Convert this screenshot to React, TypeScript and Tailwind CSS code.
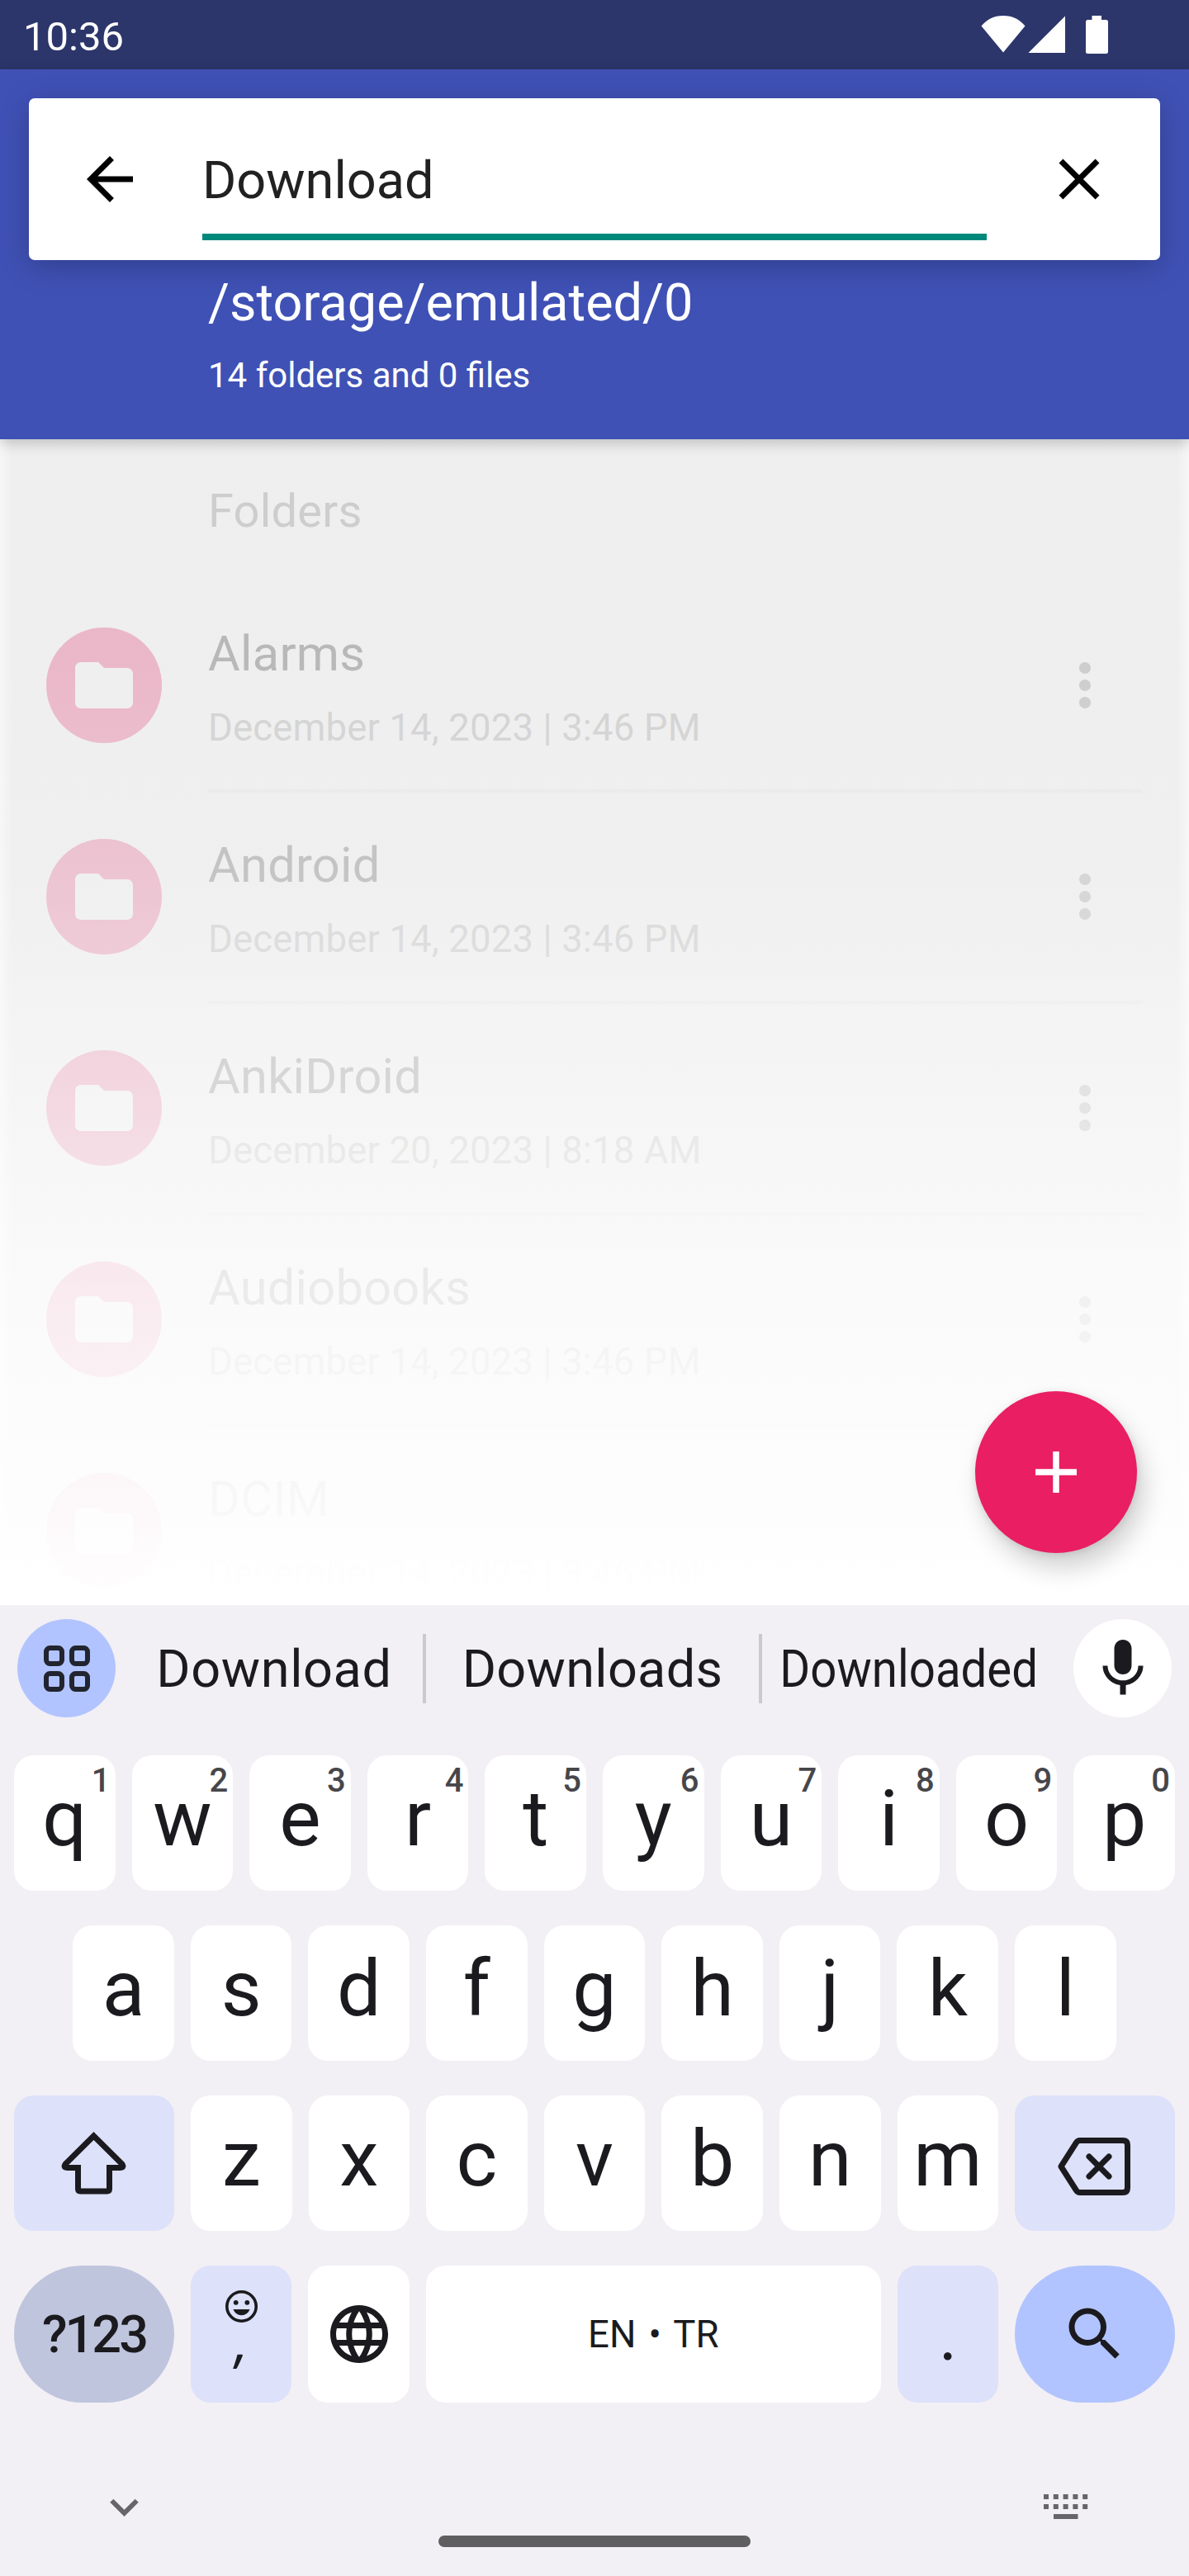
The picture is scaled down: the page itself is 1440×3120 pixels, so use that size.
import React from "react";
import {
  MdArrowBack,
  MdClose,
  MdExpandMore,
  MdFolder,
  MdLanguage,
  MdMic,
  MdMoreVert,
  MdSearch,
} from "react-icons/md";

const folders = [
  { name: "Alarms", date: "December 14, 2023 | 3:46 PM" },
  { name: "Android", date: "December 14, 2023 | 3:46 PM" },
  { name: "AnkiDroid", date: "December 20, 2023 | 8:18 AM" },
  { name: "Audiobooks", date: "December 14, 2023 | 3:46 PM" },
  { name: "DCIM", date: "December 14, 2023 | 3:46 PM" },
];

const topRow = ["q", "w", "e", "r", "t", "y", "u", "i", "o", "p"];
const middleRow = ["a", "s", "d", "f", "g", "h", "j", "k", "l"];
const bottomRow = ["z", "x", "c", "v", "b", "n", "m"];

function StatusBar() {
  return (
    <div className="flex h-[84px] items-start justify-between bg-[#2c366b] pl-[28px] pr-[98px] text-white">
      <span className="mt-[20px] text-[49px] leading-none">10:36</span>
      <div className="mt-[19px] flex items-start">
        <svg className="h-[45px] w-[54px]" viewBox="0 0 54 45" fill="currentColor">
          <path d="M0.5 12.5C7 4.500 16 0 27 0s20 4.500 26.500 12.500L27 44.500z" />
        </svg>
        <svg className="ml-[3px] h-[45px] w-[45px]" viewBox="0 0 45 45" fill="currentColor">
          <path d="M45 0.500V45H0.500z" />
        </svg>
        <svg className="ml-[25px] h-[46px] w-[27px]" viewBox="0 0 27 46" fill="currentColor">
          <path d="M7.500 0h11.500v5h5.500a2.500 2.500 0 0 1 2.500 2.500v36a2.500 2.500 0 0 1-2.500 2.500h-22A2.500 2.500 0 0 1 0 43.500v-36A2.500 2.500 0 0 1 2.500 5h5z" />
        </svg>
      </div>
    </div>
  );
}

function Header() {
  return (
    <header className="relative z-10 h-[448px] bg-[#3f51b5] px-[35px] pt-[35px] shadow-[0_4px_16px_rgba(0,0,0,0.22)]">
      <div className="flex h-[196px] items-center rounded-[7px] bg-white pl-[56px] pr-[56px] shadow-[0_8px_36px_rgba(0,0,0,0.22)]">
        <MdArrowBack className="size-[84px] text-black" />
        <div className="ml-[70px] flex h-[148px] w-[950px] flex-col justify-end border-b-[8px] border-[#00897b] pb-[33px]">
          <span className="text-[63px] leading-none text-[#212121]">Download</span>
        </div>
        <MdClose className="ml-auto size-[84px] text-black" />
      </div>
      <div className="flex flex-col pl-[217px] text-white">
        <span className="mt-[20px] text-[63px] leading-none">/storage/emulated/0</span>
        <span className="mt-[36px] text-[42px] leading-none">14 folders and 0 files</span>
      </div>
    </header>
  );
}

function FolderRow({ name, date }: { name: string; date: string }) {
  return (
    <div className="flex h-[256px] shrink-0 pl-[56px] pr-[56px]">
      <div className="mt-[56px] flex size-[140px] shrink-0 items-center justify-center rounded-full bg-[#e91e63]">
        <MdFolder className="size-[84px] text-[#fafafa]" />
      </div>
      <div className="ml-[56px] flex flex-1 justify-between border-b-[4px] border-[#e6e6e6] pr-[28px]">
        <div className="flex flex-col">
          <span className="mt-[59px] text-[59.5px] leading-none tracking-[0.25px] text-[#212121]">{name}</span>
          <span className="mt-[36px] text-[45.5px] leading-none tracking-[0.13px] text-[#8a8a8a]">{date}</span>
        </div>
        <MdMoreVert className="mt-[84px] size-[84px] text-[#757575]" />
      </div>
    </div>
  );
}

function FolderList() {
  return (
    <section className="relative flex h-[1412px] flex-col overflow-hidden bg-[#fafafa]">
      <h2 className="h-[172px] shrink-0 pl-[252px] pt-[59px] text-[56px] leading-none tracking-[0.2px] text-[#757575]">
        Folders
      </h2>
      {folders.map((f) => (
        <FolderRow key={f.name} name={f.name} date={f.date} />
      ))}
      {/* Fading scrim of the closing suggestion panel */}
      <div className="absolute inset-0 bg-[linear-gradient(to_bottom,rgba(235,235,235,0.75)_0px,rgba(235,235,235,0.75)_270px,rgba(237,237,237,0.80)_518px,rgba(244,244,244,0.86)_773px,rgba(250,250,250,0.93)_1028px,rgba(253,253,253,0.977)_1283px,rgba(255,255,255,0.995)_1400px)]" />
      <div className="absolute inset-y-0 left-0 w-[15px] bg-linear-to-r from-white/50 to-transparent" />
      <div className="absolute inset-y-0 right-0 w-[15px] bg-linear-to-l from-white/50 to-transparent" />
      <button className="absolute bottom-[63px] right-[63px] flex size-[196px] items-center justify-center rounded-full bg-[#e91e63] shadow-[8px_18px_30px_rgba(0,0,0,0.18),0_2px_10px_rgba(0,0,0,0.10)]">
        <svg className="size-[50px]" viewBox="0 0 50 50" stroke="white" strokeWidth="7.500">
          <path d="M25 0v50M0 25h50" />
        </svg>
      </button>
    </section>
  );
}

function LetterKey({ letter, hint }: { letter: string; hint?: string }) {
  return (
    <div className="relative flex h-[164px] flex-1 justify-center rounded-[24px] bg-white text-[#1b1b1f]">
      <span className="mt-[29px] text-[95px] leading-none">{letter}</span>
      {hint && (
        <span className="absolute right-[6px] top-[11px] text-[40px] font-medium leading-none text-[#47464a]">
          {hint}
        </span>
      )}
    </div>
  );
}

function SuggestionStrip() {
  return (
    <div className="flex h-[153px] items-center pl-[21px] pr-[21px] text-[#1b1b1f]">
      <div className="flex size-[119px] items-center justify-center rounded-full bg-[#b2c4ff]">
        <svg className="size-[56px]" viewBox="0 0 56 56" fill="none" stroke="#22252f" strokeWidth="6">
          <rect x="3" y="3" width="19" height="19" rx="4.500" />
          <rect x="34" y="3" width="19" height="19" rx="4.500" />
          <rect x="3" y="34" width="19" height="19" rx="4.500" />
          <rect x="34" y="34" width="19" height="19" rx="4.500" />
        </svg>
      </div>
      <span className="ml-[12px] w-[360px] pt-[2px] text-center text-[63px] leading-none tracking-[0.6px]">Download</span>
      <span className="h-[84px] w-[4px] bg-[#cbc9cf]" />
      <span className="w-[403px] pt-[2px] text-center text-[63px] leading-none tracking-[0.3px]">Downloads</span>
      <span className="h-[84px] w-[4px] bg-[#cbc9cf]" />
      <span className="flex w-[356px] justify-center pt-[2px] text-[63px] leading-none">
        <span className="scale-x-[0.895]">Downloaded</span>
      </span>
      <div className="ml-auto flex size-[119px] items-center justify-center rounded-full bg-white">
        <MdMic className="size-[84px]" />
      </div>
    </div>
  );
}

function ShiftIcon() {
  return (
    <svg className="h-[76px] w-[79px]" viewBox="0 0 79 76" fill="none" stroke="#1b1b1f" strokeWidth="7">
      <path d="M39.500 5 73.800 39q3.200 4.500-2.800 4.500H58.500V69q0 3-3 3h-32q-3 0-3-3V43.500H8q-6 0-2.800-4.500z" />
    </svg>
  );
}

function BackspaceIcon() {
  return (
    <svg className="mr-[2px] mt-[7px] h-[70px] w-[89px]" viewBox="0 0 89 70" fill="none" stroke="#1b1b1f" strokeWidth="7">
      <path d="M4 35 22.500 6q1.700-2.500 4.500-2.500h52q5.500 0 5.500 5.500v52q0 5.500-5.500 5.500H27q-2.800 0-4.500-2.500z" strokeLinejoin="round" />
      <path d="M38 23l24 24M62 23 38 47" strokeLinecap="round" />
    </svg>
  );
}

function EmojiIcon() {
  return (
    <svg className="size-[39px]" viewBox="0 0 39 39" fill="#1b1b1f">
      <circle cx="19.500" cy="19.500" r="17.700" fill="none" stroke="#1b1b1f" strokeWidth="3.600" />
      <circle cx="12.700" cy="14.800" r="2.900" />
      <circle cx="26.300" cy="14.800" r="2.900" />
      <path d="M9.500 23h20c-1.600 4.300-5.500 7.200-10 7.200S11.100 27.300 9.500 23z" />
    </svg>
  );
}

function KeyboardIcon() {
  const columns = [0, 11.8, 23.6, 35.4, 47.2];
  return (
    <svg className="h-[30px] w-[54px]" viewBox="0 0 54 30" fill="#666568">
      {columns.map((x) => (
        <React.Fragment key={x}>
          <rect x={x} y="0" width="6" height="6" />
          <rect x={x} y="12" width="6" height="6" />
        </React.Fragment>
      ))}
      <rect x="12" y="24" width="29.500" height="6" />
    </svg>
  );
}

function Keyboard() {
  return (
    <section className="flex h-[1176px] flex-col bg-[#f2f0f5] shadow-[0_-2px_10px_rgba(0,0,0,0.06)]">
      <SuggestionStrip />
      <div className="mt-[29px] flex flex-col gap-[42px] px-[17px]">
        <div className="flex gap-[20px]">
          {topRow.map((l, i) => (
            <LetterKey key={l} letter={l} hint={String((i + 1) % 10)} />
          ))}
        </div>
        <div className="flex gap-[20px] px-[71.300px]">
          {middleRow.map((l) => (
            <LetterKey key={l} letter={l} />
          ))}
        </div>
        <div className="flex gap-[20px]">
          <div className="flex w-[193.900px] items-center justify-center rounded-[24px] bg-[#dde1f9]">
            <ShiftIcon />
          </div>
          {bottomRow.map((l) => (
            <LetterKey key={l} letter={l} />
          ))}
          <div className="flex w-[193.900px] items-center justify-center rounded-[24px] bg-[#dde1f9]">
            <BackspaceIcon />
          </div>
        </div>
        <div className="flex h-[166px] gap-[20px] text-[#1b1b1f]">
          <div className="flex w-[193.900px] justify-center rounded-full bg-[#c0c5de]">
            <span className="mt-[52px] text-[63px] font-medium leading-none tracking-[-3px]">?123</span>
          </div>
          <div className="flex w-[122.600px] flex-col items-center rounded-[24px] bg-[#dde1f9] pt-[30px]">
            <EmojiIcon />
            <span className="mt-[-15px] inline-block -skew-x-6 font-['Open_Sans'] text-[70px] font-medium leading-none">,</span>
          </div>
          <div className="flex w-[122.600px] items-center justify-center rounded-[24px] bg-white">
            <MdLanguage className="size-[84px]" />
          </div>
          <div className="flex flex-1 justify-center rounded-[24px] bg-white">
            <span className="mt-[61px] text-[45.500px] leading-none [word-spacing:4px]">EN • TR</span>
          </div>
          <div className="flex w-[122.600px] justify-center rounded-[24px] bg-[#dde1f9]">
            <span className="mt-[47px] font-['Lato'] text-[76px] leading-none">.</span>
          </div>
          <div className="flex w-[193.900px] items-center justify-center rounded-full bg-[#b2c4ff]">
            <MdSearch className="size-[84px]" />
          </div>
        </div>
      </div>
      <div className="mt-[91px] flex h-[70px] items-center justify-between pl-[116px] pr-[122px]">
        <MdExpandMore className="size-[69px] text-[#666568]" />
        <KeyboardIcon />
      </div>
      <div className="mx-auto h-[14px] w-[378px] rounded-full bg-[#5f5f61]" />
    </section>
  );
}

export default function App() {
  return (
    <main className="flex h-[3120px] w-[1440px] flex-col overflow-hidden font-['Roboto',sans-serif]">
      <StatusBar />
      <Header />
      <FolderList />
      <Keyboard />
    </main>
  );
}
